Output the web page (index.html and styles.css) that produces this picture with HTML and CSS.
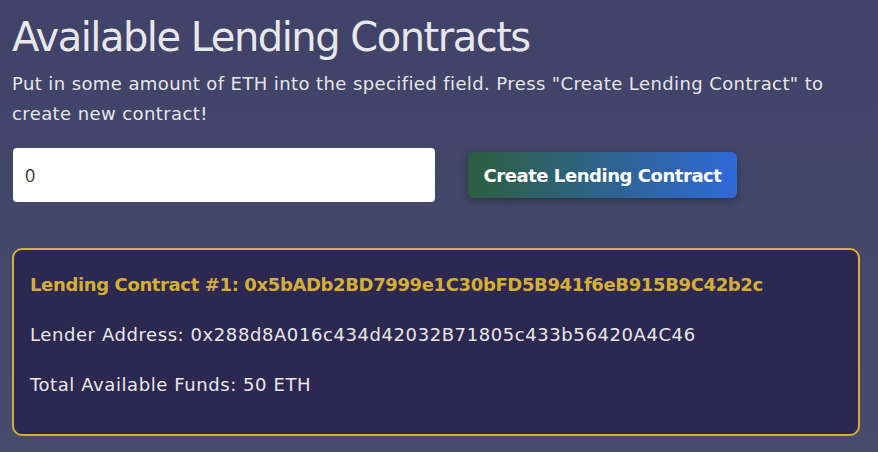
FILE: index.html
```html
<!DOCTYPE html>
<html>
<head>
<meta charset="utf-8">
<link rel="stylesheet" href="styles.css">
</head>
<body>
<main class="page">
  <h1 class="title">Available Lending Contracts</h1>
  <p class="intro">Put in some amount of ETH into the specified field. Press "Create Lending Contract" to create new contract!</p>
  <div class="form-row">
    <input class="amount" type="text" value="0">
    <button class="create-btn">Create Lending Contract</button>
  </div>
  <section class="card">
    <p class="card-title">Lending Contract #1: 0x5bADb2BD7999e1C30bFD5B941f6eB915B9C42b2c</p>
    <p class="card-line">Lender Address: 0x288d8A016c434d42032B71805c433b56420A4C46</p>
    <p class="card-line">Total Available Funds: 50 ETH</p>
  </section>
</main>
</body>
</html>
```
FILE: styles.css
```css
html, body {
  margin: 0;
  height: 100%;
}
body {
  background: linear-gradient(180deg, #404267 0%, #474c6d 100%);
  color: #e6e6ea;
  font-family: "Comic Sans MS", "DejaVu Sans", sans-serif;
  overflow: hidden;
}
.page {
  padding: 10px 18px 0 12px;
}
.title {
  margin: 0;
  font-size: 40px;
  font-weight: 400;
  line-height: 54px;
  letter-spacing: -1.5px;
  color: #e8e8ec;
}
.intro {
  margin: 5px 0 0;
  font-size: 18px;
  line-height: 30px;
  letter-spacing: 0.4px;
}
.form-row {
  display: flex;
  align-items: center;
  gap: 33px;
  margin-top: 19px;
  padding-left: 1px;
}
.amount {
  width: 422px;
  height: 54px;
  box-sizing: border-box;
  border: none;
  border-radius: 4px;
  padding: 0 12px;
  font-family: "Open Sans", sans-serif;
  font-size: 18px;
  color: #333;
  background: #fff;
}
.create-btn {
  height: 46px;
  width: 269px;
  border: none;
  border-radius: 6px;
  background: linear-gradient(90deg, #2d5e3e 0%, #3069d9 100%);
  color: #fff;
  font-family: "Comic Sans MS", "DejaVu Sans", sans-serif;
  font-weight: 700;
  font-size: 18px;
  letter-spacing: -0.45px;
  box-shadow: 0 3px 8px rgba(0,0,0,0.3);
}
.card {
  margin-top: 46px;
  border: 2px solid #d4af37;
  border-radius: 10px;
  background: #2d2850;
  padding: 20px 16px 34px;
}
.card p {
  margin: 0;
  font-size: 18px;
  line-height: 30px;
}
.card-title {
  color: #d4af37;
  font-weight: 700;
  letter-spacing: -0.37px;
}
.card-line {
  margin-top: 20px !important;
  color: #e8e8ec;
  letter-spacing: 0.58px;
}
```
